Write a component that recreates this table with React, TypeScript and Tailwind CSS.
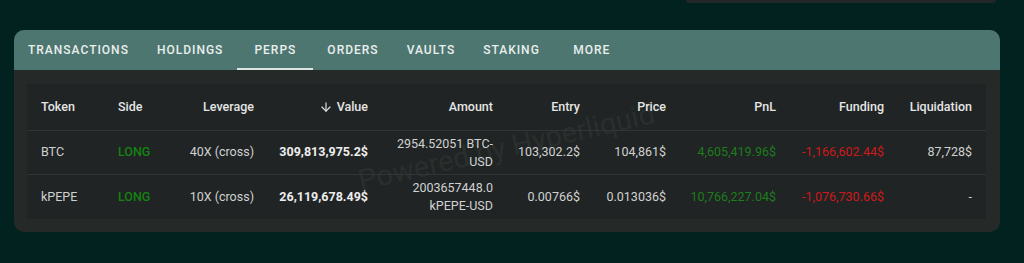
import { ArrowDown } from "lucide-react";

const tabs = ["TRANSACTIONS", "HOLDINGS", "PERPS", "ORDERS", "VAULTS", "STAKING", "MORE"];

type Row = {
  token: string;
  leverage: string;
  value: string;
  amount: string;
  entry: string;
  price: string;
  pnl: string;
  funding: string;
  liquidation: string;
};

const rows: Row[] = [
  {
    token: "BTC",
    leverage: "40X (cross)",
    value: "309,813,975.2$",
    amount: "2954.52051 BTC-USD",
    entry: "103,302.2$",
    price: "104,861$",
    pnl: "4,605,419.96$",
    funding: "-1,166,602.44$",
    liquidation: "87,728$",
  },
  {
    token: "kPEPE",
    leverage: "10X (cross)",
    value: "26,119,678.49$",
    amount: "2003657448.0 kPEPE-USD",
    entry: "0.00766$",
    price: "0.013036$",
    pnl: "10,766,227.04$",
    funding: "-1,076,730.66$",
    liquidation: "-",
  },
];

const cols = "grid grid-cols-[77px_66px_98px_114px_125px_87px_86px_110px_108px_88px] items-center";

const App = () => {
  return (
    <div
      className="relative h-[263px] w-full overflow-hidden bg-[#02221f]"
      style={{ fontFamily: "Roboto, 'Liberation Sans', sans-serif" }}
    >
      {/* edge of the panel above */}
      <div className="ml-[686px] h-[3px] w-[310px] rounded-b-[6px] bg-[#232827]" />

      <div className="relative ml-[14px] mt-[27px] w-[986px] overflow-hidden rounded-[10px] bg-[#252a29]">
        <div className="flex h-[40px] items-stretch bg-[#4e7670]">
          {tabs.map((t) => (
            <div
              key={t}
              className="relative flex min-w-[76px] items-center justify-center px-[14px] text-[12px] font-medium tracking-[1px] text-[#e9efed]"
            >
              {t}
              {t === "PERPS" && (
                <span className="absolute bottom-0 left-0 h-[2px] w-full bg-[#dce6e3]" />
              )}
            </div>
          ))}
        </div>

        <div className="px-[13px] pb-[13px] pt-[14px]">
          <div className="relative w-[959px] bg-[#212424] text-[12.5px]">
            {/* watermark, behind the rows */}
            <div className="pointer-events-none absolute left-[328px] top-[42px] -rotate-[13deg] whitespace-nowrap text-[29px] text-[#292f2d]">
              Powered by Hyperliquid
            </div>

            <div className={`${cols} relative h-[47px] border-b border-[#30353a] font-medium text-[#e4e6e5]`}>
              <div className="pl-[14px]">Token</div>
              <div className="pl-[14px]">Side</div>
              <div className="pr-[14px] text-right">Leverage</div>
              <div className="flex items-center justify-end gap-[4px] pr-[14px]">
                <ArrowDown size={14} strokeWidth={2} />
                Value
              </div>
              <div className="pr-[14px] text-right">Amount</div>
              <div className="pr-[14px] text-right">Entry</div>
              <div className="pr-[14px] text-right">Price</div>
              <div className="pr-[14px] text-right">PnL</div>
              <div className="pr-[14px] text-right">Funding</div>
              <div className="pr-[14px] text-right">Liquidation</div>
            </div>

            {rows.map((r, i) => (
              <div
                key={r.token}
                className={`${cols} relative h-[44px] text-[#d0d2d1] ${i === 0 ? "border-b border-[#30353a]" : ""}`}
              >
                <div className="pl-[14px]">{r.token}</div>
                <div className="pl-[14px] font-medium text-[#138313]">LONG</div>
                <div className="pr-[14px] text-right">{r.leverage}</div>
                <div className="pr-[14px] text-right font-bold text-[#eeeeee]">{r.value}</div>
                <div className="pr-[14px] text-right leading-[18px]">{r.amount}</div>
                <div className="pr-[14px] text-right">{r.entry}</div>
                <div className="pr-[14px] text-right">{r.price}</div>
                <div className="pr-[14px] text-right text-[#1c7d1c]">{r.pnl}</div>
                <div className="pr-[14px] text-right text-[#cc1a1a]">{r.funding}</div>
                <div className="pr-[14px] text-right">{r.liquidation}</div>
              </div>
            ))}
          </div>
        </div>
      </div>
    </div>
  );
};

export default App;
